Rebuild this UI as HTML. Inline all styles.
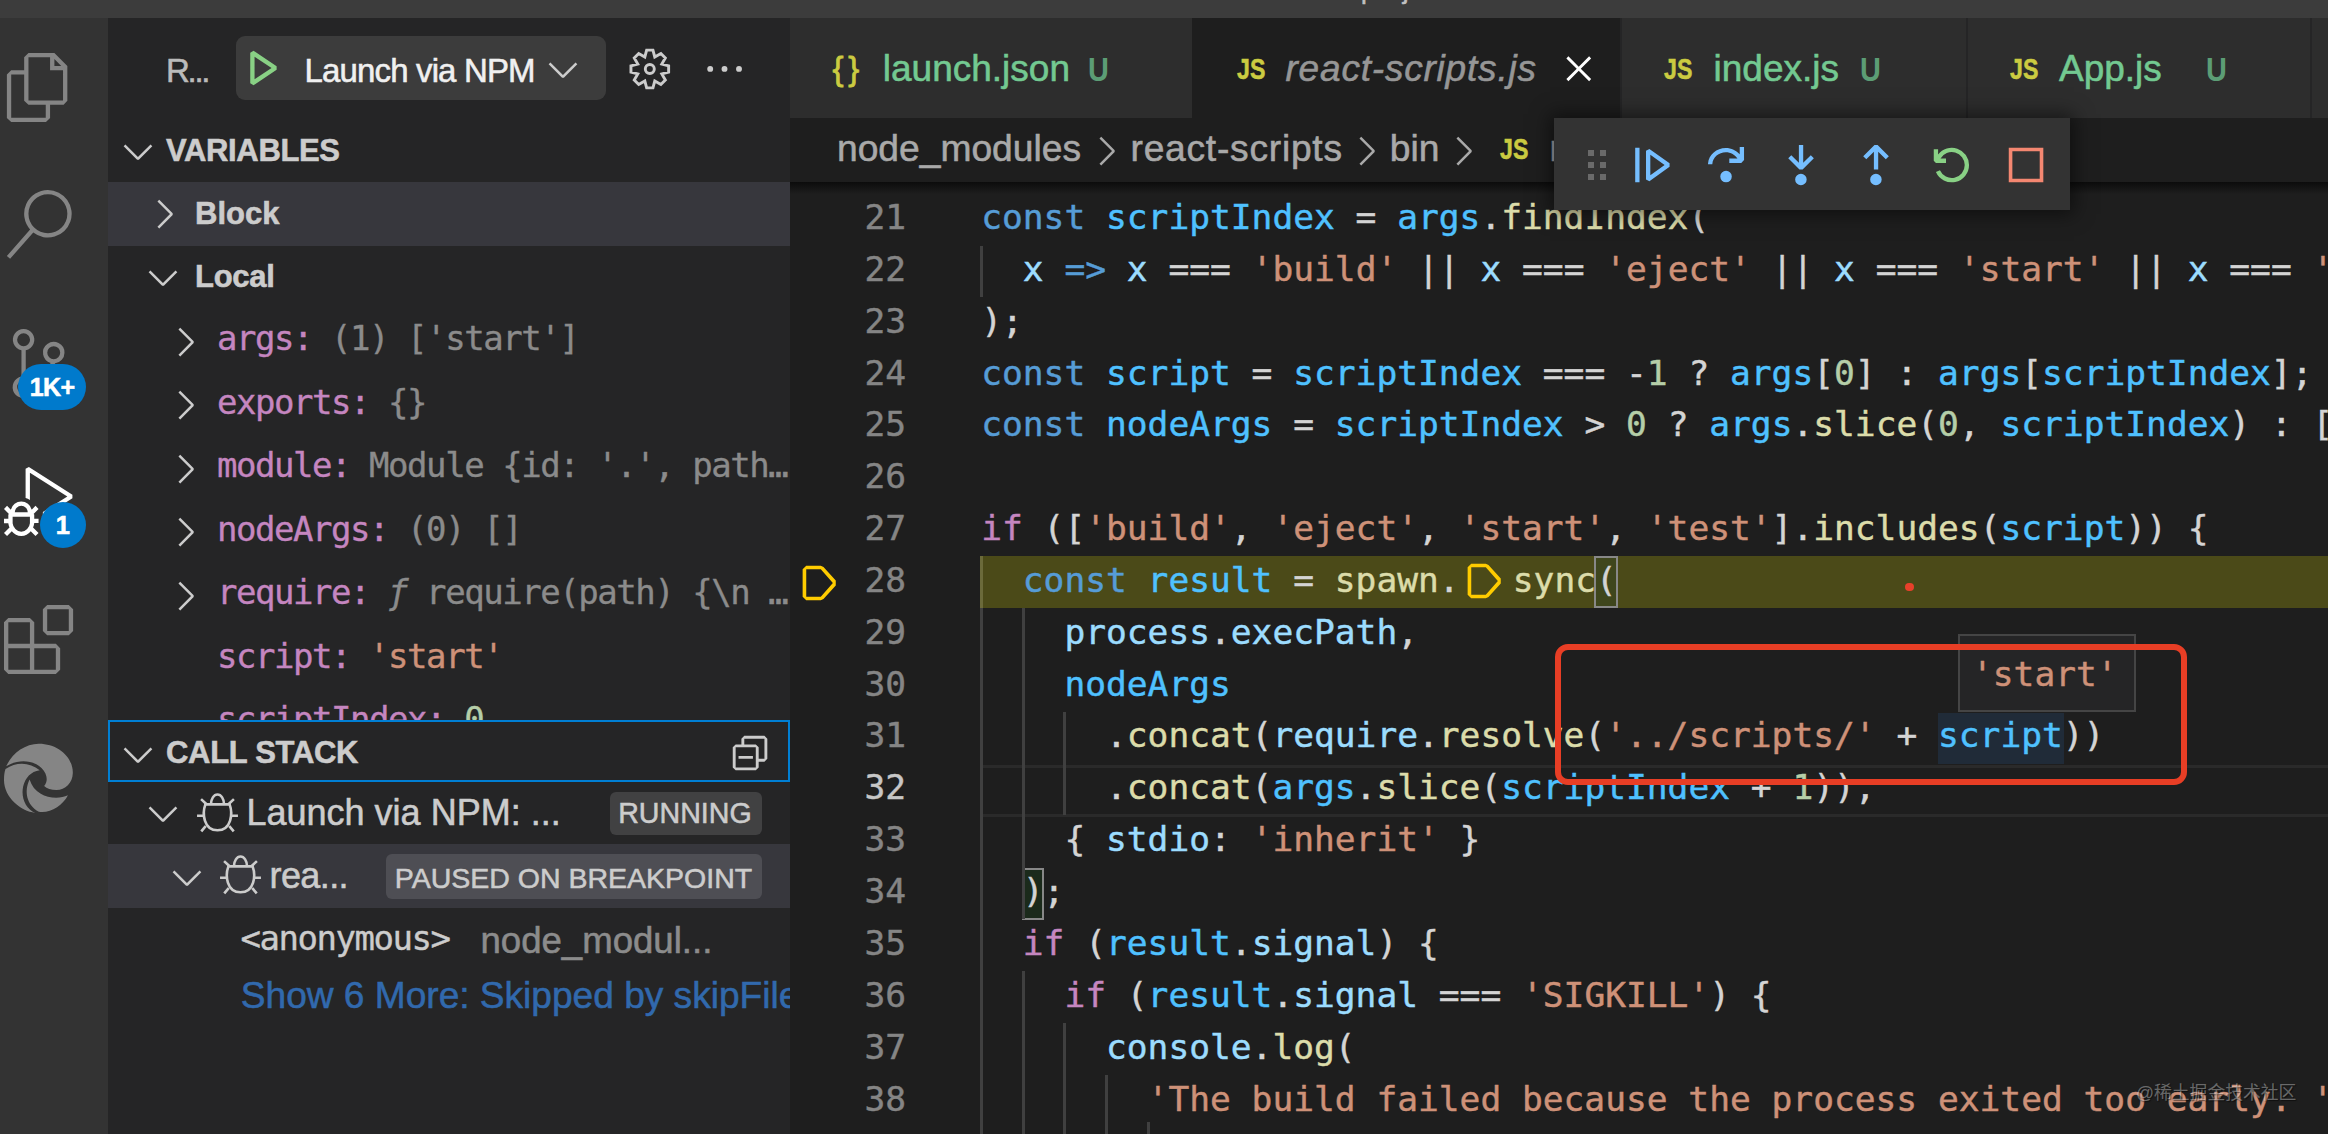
<!DOCTYPE html>
<html lang="en"><head><meta charset="utf-8"><title>react-scripts.js</title>
<style>
*{box-sizing:border-box;margin:0;padding:0}
html,body{width:2328px;height:1134px;overflow:hidden;background:#1e1e1e}
body{position:relative;font-family:"Liberation Sans","Noto Sans CJK SC",sans-serif;color:#ccc}
.abs{position:absolute}
.ui{-webkit-text-stroke-width:0.55px;font-family:"Liberation Sans","Noto Sans CJK SC",sans-serif;white-space:pre;position:absolute}
.mono{-webkit-text-stroke-width:0.4px;font-family:"DejaVu Sans Mono","Liberation Mono",monospace;white-space:pre;position:absolute}
#titlebar{left:0;top:0;width:2328px;height:18px;background:#3c3c3c}
#activity{left:0;top:18px;width:108px;height:1116px;background:#333333}
#sidebar{left:108px;top:18px;width:682px;height:1116px;background:#252526}
#tabsbg{left:790px;top:18px;width:1538px;height:100px;background:#252526}
.tab{position:absolute;top:18px;height:100px;background:#2d2d2d}
.tab.active{background:#1e1e1e}
#crumbs{left:790px;top:118px;width:1538px;height:64px;background:#1e1e1e}
.row{position:absolute;left:108px;width:682px;height:63.4px}
.sel{background:#37373d}
.cl{-webkit-text-stroke-width:0.45px;position:absolute;left:982px;height:51.84px;line-height:51.84px;font-size:34.56px;color:#d4d4d4;font-family:"DejaVu Sans Mono","Liberation Mono",monospace;white-space:pre}
.ln{-webkit-text-stroke-width:0.45px;position:absolute;left:801px;width:105px;text-align:right;height:51.84px;line-height:51.84px;font-size:34.56px;color:#858585;font-family:"DejaVu Sans Mono","Liberation Mono",monospace}
.k{color:#569cd6}.c{color:#4fc1ff}.v{color:#9cdcfe}.f{color:#dcdcaa}.s{color:#ce9178}.n{color:#b5cea8}.p{color:#c586c0}
.guide{position:absolute;width:3px;background:#404040}
.var{-webkit-text-stroke-width:0.35px;position:absolute;left:218px;width:571.5px;overflow:hidden;height:63.4px;line-height:63.4px;font-size:34px;letter-spacing:-1.46px;font-family:"DejaVu Sans Mono","Liberation Mono",monospace;white-space:pre;color:#8b8b8b}
.var b{font-weight:normal;color:#c586c0}
svg{position:absolute;overflow:visible}

</style></head>
<body>
<div class="abs" id="titlebar"></div>
<div class="abs" id="activity"></div>
<div class="abs" id="sidebar"></div>
<div class="abs" id="tabsbg"></div>
<svg style="left:4.2px;top:53px" width="69.12" height="69.12" viewBox="0 0 24 24" ><path fill="#858585" d="M17.5 0h-9L7 1.5V6H2.5L1 7.5v15.07L2.5 24h12.07L16 22.57V18h4.7l1.3-1.43V4.5L17.5 0zm0 2.12l2.38 2.38H17.5V2.12zm-3 20.38h-12v-15H7v9.07L8.5 18h6v4.5zm6-6h-12v-15H16V6h4.5v10.5z"/></svg>
<svg style="left:4.2px;top:190px" width="69.12" height="69.12" viewBox="0 0 24 24" ><path fill="#858585" d="M15.25 0a8.25 8.25 0 0 0-6.18 13.72L1 22.88l1.12 1 8.05-9.12A8.251 8.251 0 1 0 15.25.01V0zm0 15a6.75 6.75 0 1 1 0-13.5 6.75 6.75 0 0 1 0 13.5z"/></svg>
<svg style="left:4.2px;top:329px" width="69.12" height="69.12" viewBox="0 0 24 24" ><path fill="#858585" d="M21.007 8.222A3.738 3.738 0 0 0 15.045 5.2a3.737 3.737 0 0 0 1.156 6.583 2.988 2.988 0 0 1-2.668 1.67h-2.99a4.456 4.456 0 0 0-2.989 1.165V7.4a3.737 3.737 0 1 0-1.494 0v9.117a3.776 3.776 0 1 0 1.816.099 2.99 2.99 0 0 1 2.668-1.667h2.99a4.484 4.484 0 0 0 4.223-3.039 3.736 3.736 0 0 0 3.25-3.687zM4.565 3.738a2.242 2.242 0 1 1 4.484 0 2.242 2.242 0 0 1-4.484 0zm4.484 16.441a2.242 2.242 0 1 1-4.484 0 2.242 2.242 0 0 1 4.484 0zm8.221-9.715a2.242 2.242 0 1 1 0-4.485 2.242 2.242 0 0 1 0 4.485z"/></svg>
<svg style="left:4.2px;top:467px" width="69.12" height="69.12" viewBox="0 0 24 24" ><path fill="#ffffff" d="M10.94 13.5l-1.32 1.32a3.73 3.73 0 0 0-7.24 0L1.06 13.5 0 14.56l1.72 1.72-.22.22V18H0v1.5h1.5v.08c.077.489.214.966.41 1.42L0 22.94 1.06 24l1.65-1.65A4.308 4.308 0 0 0 6 24a4.31 4.31 0 0 0 3.29-1.65L10.94 24 12 22.94 10.09 21c.198-.464.336-.951.41-1.45v-.1H12V18h-1.5v-1.5l-.22-.22L12 14.56l-1.06-1.06zM6 13.5a2.25 2.25 0 0 1 2.25 2.25h-4.5A2.25 2.25 0 0 1 6 13.5zm3 6a3.33 3.33 0 0 1-3 3 3.33 3.33 0 0 1-3-3v-2.25h6v2.25zm14.76-9.9v1.26L13.5 17.37V15.6l8.5-5.37L9 2v9.46a5.07 5.07 0 0 0-1.5-.72V.63L8.64 0l15.12 9.6z"/></svg>
<svg style="left:4.2px;top:605px" width="69.12" height="69.12" viewBox="0 0 24 24" ><path fill="#858585" d="M13.5 1.5L15 0h7.5L24 1.5V9l-1.5 1.5H15L13.5 9V1.5zm1.5 0V9h7.5V1.5H15zM0 15V6l1.5-1.5H9L10.5 6v7.5H18l1.5 1.5v7.5L18 24H1.5L0 22.5V15zm9-1.5V6H1.5v7.5H9zM9 15H1.5v7.5H9V15zm1.5 7.5H18V15h-7.5v7.5z"/></svg>
<svg style="left:0;top:0" width="110" height="1134"><g transform="translate(4,743.7) scale(0.08822) translate(-45,-155)" fill="#858585"><path d="M70 412 C130 270 280 155 440 155 C660 155 830 310 825 490 C822 600 740 680 640 680 C580 680 530 665 500 635 C545 585 540 500 470 430 C380 340 200 325 70 412Z"/><path d="M62 442 C190 355 340 368 450 455 C350 470 285 540 262 640 C235 770 290 890 400 940 C230 920 40 760 45 560 C45 510 52 470 62 442Z"/><path d="M335 560 C270 690 300 850 440 927 C560 950 710 860 770 740 C640 800 400 770 335 560Z"/></g></svg>
<div class="abs" style="left:18.4px;top:364.2px;width:67.4px;height:46px;border-radius:23px;background:#007acc"></div>
<div class="ui" style="left:18.4px;top:364.2px;width:67.4px;height:46px;line-height:46px;text-align:center;font-size:25px;font-weight:bold;color:#fff;letter-spacing:-0.6px">1K+</div>
<div class="abs" style="left:39.9px;top:502.3px;width:46px;height:46px;border-radius:23px;background:#007acc"></div>
<div class="ui" style="left:39.9px;top:502.3px;width:46px;height:46px;line-height:46px;text-align:center;font-size:25.5px;font-weight:bold;color:#fff">1</div>
<div class="ui" style="left:166px;top:46.6px;line-height:48px;font-size:33px;color:#bbbbbb;letter-spacing:-2.3px;">R...</div>
<div class="abs" style="left:236px;top:36px;width:370px;height:64px;border-radius:9px;background:#3c3c3c"></div>
<svg style="left:237.5px;top:44.2px" width="46.08" height="46.08" viewBox="0 0 16 16" ><path fill="#89d185" d="M4.25 3l1.166-.624 8 5.333v1.248l-8 5.334-1.166-.624V3zm1.5 1.401v7.864l5.898-3.932L5.75 4.401z"/></svg>
<div class="ui" style="left:304.5px;top:46.8px;line-height:48px;font-size:33px;color:#f0f0f0;letter-spacing:-0.85px;">Launch via NPM</div>
<svg style="left:540.4px;top:45.6px" width="46.08" height="46.08" viewBox="0 0 16 16" ><path fill="#cccccc" d="M7.976 10.072l4.357-4.357.62.618L8.284 11h-.618L3 6.333l.619-.618 4.357 4.357z"/></svg>
<svg style="left:0;top:0" width="2328" height="1134"><path d="M652.95 50.16 L646.65 50.16 L644.83 56.99 L638.71 53.45 L634.25 57.91 L637.79 64.03 L630.96 65.85 L630.96 72.15 L637.79 73.97 L634.25 80.09 L638.71 84.55 L644.83 81.01 L646.65 87.84 L652.95 87.84 L654.77 81.01 L660.89 84.55 L665.35 80.09 L661.81 73.97 L668.64 72.15 L668.64 65.85 L661.81 64.03 L665.35 57.91 L660.89 53.45 L654.77 56.99Z" fill="none" stroke="#cccccc" stroke-width="2.9" stroke-linejoin="miter"/><circle cx="649.8" cy="69" r="4.5" fill="none" stroke="#cccccc" stroke-width="2.9"/><circle cx="710.2" cy="68.9" r="2.95" fill="#ccc"/><circle cx="724.5" cy="68.9" r="2.95" fill="#ccc"/><circle cx="739" cy="68.9" r="2.95" fill="#ccc"/></svg>
<svg style="left:114.9px;top:127.6px" width="46.08" height="46.08" viewBox="0 0 16 16" ><path fill="#cccccc" d="M7.976 10.072l4.357-4.357.62.618L8.284 11h-.618L3 6.333l.619-.618 4.357 4.357z"/></svg>
<div class="ui" style="left:166px;top:126.6px;line-height:48px;font-size:31px;color:#cccccc;letter-spacing:-0.35px;font-weight:bold;">VARIABLES</div>
<div class="row sel" style="top:182px;height:64px"></div>
<svg style="left:141.3px;top:190.5px" width="46.08" height="46.08" viewBox="0 0 16 16" ><path fill="#cccccc" d="M10.072 8.024L5.715 3.667l.618-.62L11 7.716v.618L6.333 13l-.618-.619 4.357-4.357z"/></svg>
<div class="ui" style="left:195px;top:189.5px;line-height:48px;font-size:31px;color:#cccccc;font-weight:bold;">Block</div>
<svg style="left:140.4px;top:253.8px" width="46.08" height="46.08" viewBox="0 0 16 16" ><path fill="#cccccc" d="M7.976 10.072l4.357-4.357.62.618L8.284 11h-.618L3 6.333l.619-.618 4.357 4.357z"/></svg>
<div class="ui" style="left:195px;top:253.3px;line-height:48px;font-size:31px;color:#cccccc;letter-spacing:-0.3px;font-weight:bold;">Local</div>
<svg style="left:162.4px;top:318.9px" width="46.08" height="46.08" viewBox="0 0 16 16" ><path fill="#cccccc" d="M10.072 8.024L5.715 3.667l.618-.62L11 7.716v.618L6.333 13l-.618-.619 4.357-4.357z"/></svg>
<div class="var" style="left:217px;top:307.0px"><b>args:</b> (1) ['start']</div>
<svg style="left:162.4px;top:382.4px" width="46.08" height="46.08" viewBox="0 0 16 16" ><path fill="#cccccc" d="M10.072 8.024L5.715 3.667l.618-.62L11 7.716v.618L6.333 13l-.618-.619 4.357-4.357z"/></svg>
<div class="var" style="left:217px;top:370.5px"><b>exports:</b> {}</div>
<svg style="left:162.4px;top:445.9px" width="46.08" height="46.08" viewBox="0 0 16 16" ><path fill="#cccccc" d="M10.072 8.024L5.715 3.667l.618-.62L11 7.716v.618L6.333 13l-.618-.619 4.357-4.357z"/></svg>
<div class="var" style="left:217px;top:434.0px"><b>module:</b> Module {id: '.', path…</div>
<svg style="left:162.4px;top:509.4px" width="46.08" height="46.08" viewBox="0 0 16 16" ><path fill="#cccccc" d="M10.072 8.024L5.715 3.667l.618-.62L11 7.716v.618L6.333 13l-.618-.619 4.357-4.357z"/></svg>
<div class="var" style="left:217px;top:497.5px"><b>nodeArgs:</b> (0) []</div>
<svg style="left:162.4px;top:572.9px" width="46.08" height="46.08" viewBox="0 0 16 16" ><path fill="#cccccc" d="M10.072 8.024L5.715 3.667l.618-.62L11 7.716v.618L6.333 13l-.618-.619 4.357-4.357z"/></svg>
<div class="var" style="left:217px;top:561.0px"><b>require:</b> <i>ƒ</i> require(path) {\n …</div>
<div class="var" style="left:217px;top:624.5px"><b>script:</b> <span style="color:#ce9178">'start'</span></div>
<div class="var" style="left:217px;top:688.0px"><b>scriptIndex:</b> <span style="color:#b5cea8">0</span></div>
<div class="abs" style="left:108px;top:720px;width:682px;height:414px;background:#252526"></div>
<div class="abs" style="left:108px;top:720px;width:682px;height:62px;border:2px solid #007fd4"></div>
<svg style="left:114.9px;top:731.1px" width="46.08" height="46.08" viewBox="0 0 16 16" ><path fill="#cccccc" d="M7.976 10.072l4.357-4.357.62.618L8.284 11h-.618L3 6.333l.619-.618 4.357 4.357z"/></svg>
<div class="ui" style="left:166px;top:729.0px;line-height:48px;font-size:31px;color:#cccccc;letter-spacing:-0.3px;font-weight:bold;">CALL STACK</div>
<svg style="left:727.2px;top:730.3px" width="46.08" height="46.08" viewBox="0 0 16 16" ><path fill="#cccccc" d="M9 9H4v1h5V9zM5 3l1-1h7l1 1v7l-1 1h-2v2l-1 1H3l-1-1V6l1-1h2V3zm1 2h4l1 1v4h2V3H6v2zm4 1H3v7h7V6z"/></svg>
<svg style="left:140.4px;top:790.3px" width="46.08" height="46.08" viewBox="0 0 16 16" ><path fill="#cccccc" d="M7.976 10.072l4.357-4.357.62.618L8.284 11h-.618L3 6.333l.619-.618 4.357 4.357z"/></svg>
<svg style="left:197px;top:792.8px" width="41" height="39" viewBox="0 0 40.700 38.800"><g fill="none" stroke="#cccccc" stroke-width="2.6"><path d="M8.300 11.3H32.4C35.6 20 34.5 37 20.35 37C6.200 37 5.100 20 8.300 11.3Z"/><path d="M13.85 11.3A6.500 9.800 0 0 1 26.85 11.3"/><path d="M4 6.100L9.200 10.900M36.700 6.100L31.500 10.900M0 22.700H6.400M34.300 22.700H40.700M8.600 33L4.200 38.200M32.100 33L36.500 38.200"/></g></svg>
<div class="ui" style="left:246.5px;top:789.2px;line-height:48px;font-size:36px;color:#cccccc;">Launch via NPM: ...</div>
<div class="abs" style="left:610.3px;top:792.3px;width:151.500px;height:43px;border-radius:6px;background:#414142"></div>
<div class="ui" style="left:618.2px;top:789.4px;line-height:48px;font-size:28.6px;color:#cccccc;">RUNNING</div>
<div class="row sel" style="top:844.2px;height:63.8px"></div>
<svg style="left:163.6px;top:853.6px" width="46.08" height="46.08" viewBox="0 0 16 16" ><path fill="#cccccc" d="M7.976 10.072l4.357-4.357.62.618L8.284 11h-.618L3 6.333l.619-.618 4.357 4.357z"/></svg>
<svg style="left:220.0px;top:855.2px" width="41" height="39" viewBox="0 0 40.700 38.800"><g fill="none" stroke="#cccccc" stroke-width="2.6"><path d="M8.300 11.3H32.4C35.6 20 34.5 37 20.35 37C6.200 37 5.100 20 8.300 11.3Z"/><path d="M13.85 11.3A6.500 9.800 0 0 1 26.85 11.3"/><path d="M4 6.100L9.200 10.900M36.700 6.100L31.500 10.900M0 22.700H6.400M34.300 22.700H40.700M8.600 33L4.200 38.200M32.100 33L36.500 38.200"/></g></svg>
<div class="ui" style="left:269.5px;top:852.2px;line-height:48px;font-size:36px;color:#cccccc;letter-spacing:-0.6px;">rea...</div>
<div class="abs" style="left:385.7px;top:854.1px;width:376.100px;height:45.4px;border-radius:6px;background:#4e4e54"></div>
<div class="ui" style="left:394.8px;top:853.6px;line-height:48px;font-size:28.5px;color:#cccccc;">PAUSED ON BREAKPOINT</div>
<div class="mono" style="left:240.5px;top:914.4px;line-height:48px;font-size:34px;color:#cccccc;letter-spacing:-1.46px;">&lt;anonymous&gt;</div>
<div class="ui" style="left:480.5px;top:917.0px;line-height:48px;font-size:36.6px;color:#8c8c8c;">node_modul...</div>
<div class="abs" style="left:240px;top:972px;width:550px;height:60px;overflow:hidden"><div class="ui" style="left:0.800px;top:-1.5px;line-height:48px;font-size:37.1px;color:#3169ad">Show 6 More: Skipped by skipFiles</div></div>
<div class="tab" style="left:790px;width:402px"></div>
<div class="tab active" style="left:1192.4px;width:427.5999999999999px"></div>
<div class="tab" style="left:1622.4px;width:343.5999999999999px"></div>
<div class="tab" style="left:1968px;width:342.3000000000002px"></div>
<div class="tab" style="left:2312.3px;width:27.699999999999818px"></div>
<div class="ui" style="left:832.5px;top:44.6px;line-height:48px;font-size:33px;color:#cbcb41;letter-spacing:-2.2px;-webkit-text-stroke-width:0.8px;">{ }</div>
<div class="ui" style="left:882.8px;top:44.8px;line-height:48px;font-size:37px;color:#73c991;">launch.json</div>
<div class="ui" style="left:1088px;top:45.0px;line-height:48px;font-size:34px;color:#5c9d75;font-weight:bold;transform:scaleX(0.85);transform-origin:0 50%;-webkit-text-stroke-width:0;">U</div>
<div class="ui" style="left:1237px;top:48.7px;line-height:40px;font-size:28.6px;color:#cbcb41;font-weight:bold;transform:scaleX(0.81);transform-origin:0 50%;">JS</div>
<div class="ui" style="left:1285.5px;top:44.8px;line-height:48px;font-size:37px;color:#969696;letter-spacing:0.8px;font-style:italic;">react-scripts.js</div>
<svg style="left:1556.2px;top:46.2px" width="45.5" height="45.5" viewBox="0 0 16 16" ><path fill="#ffffff" d="M8 8.707l3.646 3.647.708-.707L8.707 8l3.647-3.646-.707-.708L8 7.293 4.354 3.646l-.707.708L7.293 8l-3.646 3.646.707.708L8 8.707z"/></svg>
<div class="ui" style="left:1664px;top:48.7px;line-height:40px;font-size:28.6px;color:#cbcb41;font-weight:bold;transform:scaleX(0.81);transform-origin:0 50%;">JS</div>
<div class="ui" style="left:1713.5px;top:44.8px;line-height:48px;font-size:37px;color:#73c991;">index.js</div>
<div class="ui" style="left:1860.2px;top:45.0px;line-height:48px;font-size:34px;color:#5c9d75;font-weight:bold;transform:scaleX(0.85);transform-origin:0 50%;-webkit-text-stroke-width:0;">U</div>
<div class="ui" style="left:2010px;top:48.7px;line-height:40px;font-size:28.6px;color:#cbcb41;font-weight:bold;transform:scaleX(0.81);transform-origin:0 50%;">JS</div>
<div class="ui" style="left:2059px;top:44.8px;line-height:48px;font-size:37px;color:#73c991;">App.js</div>
<div class="ui" style="left:2206.2px;top:45.0px;line-height:48px;font-size:34px;color:#5c9d75;font-weight:bold;transform:scaleX(0.85);transform-origin:0 50%;-webkit-text-stroke-width:0;">U</div>
<div class="abs" id="crumbs"></div>
<div class="ui" style="left:837px;top:124.3px;line-height:48px;font-size:37.2px;color:#a9a9a9;">node_modules</div>
<svg style="left:1083.3px;top:128.1px" width="46.08" height="46.08" viewBox="0 0 16 16" ><path fill="#a9a9a9" d="M10.072 8.024L5.715 3.667l.618-.62L11 7.716v.618L6.333 13l-.618-.619 4.357-4.357z"/></svg>
<div class="ui" style="left:1130.5px;top:124.3px;line-height:48px;font-size:37.2px;color:#a9a9a9;letter-spacing:0.75px;">react-scripts</div>
<svg style="left:1343.2px;top:128.1px" width="46.08" height="46.08" viewBox="0 0 16 16" ><path fill="#a9a9a9" d="M10.072 8.024L5.715 3.667l.618-.62L11 7.716v.618L6.333 13l-.618-.619 4.357-4.357z"/></svg>
<div class="ui" style="left:1389.8px;top:124.3px;line-height:48px;font-size:37.2px;color:#a9a9a9;">bin</div>
<svg style="left:1439.9px;top:128.1px" width="46.08" height="46.08" viewBox="0 0 16 16" ><path fill="#a9a9a9" d="M10.072 8.024L5.715 3.667l.618-.62L11 7.716v.618L6.333 13l-.618-.619 4.357-4.357z"/></svg>
<div class="ui" style="left:1499.9px;top:128.9px;line-height:40px;font-size:28.6px;color:#cbcb41;font-weight:bold;transform:scaleX(0.81);transform-origin:0 50%;">JS</div>
<div class="ui" style="left:1549.5px;top:124.3px;line-height:48px;font-size:37.2px;color:#a9a9a9;">r</div>
<div class="abs" style="left:790px;top:182px;width:1538px;height:12px;background:linear-gradient(#0c0c0c,rgba(12,12,12,0))"></div>
<div class="abs" style="left:980.1px;top:556.0px;width:1348px;height:52px;background:#4b4a18"></div>
<div class="abs" style="left:983px;top:764.6px;width:1346px;height:52px;border-top:3.5px solid #2a2a2a;border-bottom:3.5px solid #2a2a2a"></div>
<div class="abs" style="left:1938.2px;top:712.6px;width:125.6px;height:51.2px;background:#202b38"></div>
<div class="abs" style="left:1594.2px;top:556.0px;width:23.8px;height:52px;background:#3f461d;border:2px solid #888"></div>
<div class="abs" style="left:1021.6px;top:867.5px;width:22.8px;height:52px;background:#1b2a1b;border:2px solid #888"></div>
<div class="guide" style="left:980.1px;top:245.5px;height:51.8px;background:#404040"></div>
<div class="guide" style="left:980.1px;top:556.0px;height:51.8px;background:#6b6a3a"></div>
<div class="guide" style="left:980.1px;top:608.0px;height:543.6px;background:#404040"></div>
<div class="guide" style="left:1021.7px;top:608.0px;height:310.6px;background:#404040"></div>
<div class="guide" style="left:1063.3px;top:711.8px;height:103.5px;background:#404040"></div>
<div class="guide" style="left:1021.7px;top:971.3px;height:181.2px;background:#404040"></div>
<div class="guide" style="left:1063.3px;top:1023.2px;height:129.4px;background:#404040"></div>
<div class="guide" style="left:1104.9px;top:1075.1px;height:77.7px;background:#404040"></div>
<div class="guide" style="left:1146.6px;top:1121.9px;height:51.8px;background:#404040"></div>
<div class="ln" style="top:192.4px;color:#858585">21</div>
<div class="cl" style="left:981.2px;top:192.4px"><span class="k">const</span> <span class="c">scriptIndex</span> = <span class="c">args</span>.<span class="f">findIndex</span>(</div>
<div class="ln" style="top:244.1px;color:#858585">22</div>
<div class="cl" style="left:981.2px;top:244.1px">  <span class="v">x</span> <span class="k">=&gt;</span> <span class="v">x</span> === <span class="s">'build'</span> || <span class="v">x</span> === <span class="s">'eject'</span> || <span class="v">x</span> === <span class="s">'start'</span> || <span class="v">x</span> === <span class="s">'test'</span></div>
<div class="ln" style="top:295.9px;color:#858585">23</div>
<div class="cl" style="left:981.2px;top:295.9px">);</div>
<div class="ln" style="top:347.6px;color:#858585">24</div>
<div class="cl" style="left:981.2px;top:347.6px"><span class="k">const</span> <span class="c">script</span> = <span class="c">scriptIndex</span> === -<span class="n">1</span> ? <span class="c">args</span>[<span class="n">0</span>] : <span class="c">args</span>[<span class="c">scriptIndex</span>];</div>
<div class="ln" style="top:399.4px;color:#858585">25</div>
<div class="cl" style="left:981.2px;top:399.4px"><span class="k">const</span> <span class="c">nodeArgs</span> = <span class="c">scriptIndex</span> &gt; <span class="n">0</span> ? <span class="c">args</span>.<span class="f">slice</span>(<span class="n">0</span>, <span class="c">scriptIndex</span>) : [];</div>
<div class="ln" style="top:451.1px;color:#858585">26</div>
<div class="ln" style="top:502.9px;color:#858585">27</div>
<div class="cl" style="left:981.2px;top:502.9px"><span class="p">if</span> ([<span class="s">'build'</span>, <span class="s">'eject'</span>, <span class="s">'start'</span>, <span class="s">'test'</span>].<span class="f">includes</span>(<span class="c">script</span>)) {</div>
<div class="ln" style="top:554.6px;color:#858585">28</div>
<div class="cl" style="left:981.2px;top:554.6px">  <span class="k">const</span> <span class="c">result</span> = <span class="f">spawn</span>.<span style="display:inline-block;width:53.2px"></span><span class="f">sync</span>(</div>
<div class="ln" style="top:606.6px;color:#858585">29</div>
<div class="cl" style="left:981.2px;top:606.6px">    <span class="v">process</span>.<span class="v">execPath</span>,</div>
<div class="ln" style="top:658.5px;color:#858585">30</div>
<div class="cl" style="left:981.2px;top:658.5px">    <span class="c">nodeArgs</span></div>
<div class="ln" style="top:710.4px;color:#858585">31</div>
<div class="cl" style="left:981.2px;top:710.4px">      .<span class="f">concat</span>(<span class="v">require</span>.<span class="f">resolve</span>(<span class="s">'../scripts/'</span> + <span class="c">script</span>))</div>
<div class="ln" style="top:762.3px;color:#c6c6c6">32</div>
<div class="cl" style="left:981.2px;top:762.3px">      .<span class="f">concat</span>(<span class="c">args</span>.<span class="f">slice</span>(<span class="c">scriptIndex</span> + <span class="n">1</span>)),</div>
<div class="ln" style="top:814.2px;color:#858585">33</div>
<div class="cl" style="left:981.2px;top:814.2px">    { <span class="v">stdio</span>: <span class="s">'inherit'</span> }</div>
<div class="ln" style="top:866.1px;color:#858585">34</div>
<div class="cl" style="left:981.2px;top:866.1px">  );</div>
<div class="ln" style="top:918.0px;color:#858585">35</div>
<div class="cl" style="left:981.2px;top:918.0px">  <span class="p">if</span> (<span class="c">result</span>.<span class="v">signal</span>) {</div>
<div class="ln" style="top:969.9px;color:#858585">36</div>
<div class="cl" style="left:981.2px;top:969.9px">    <span class="p">if</span> (<span class="c">result</span>.<span class="v">signal</span> === <span class="s">'SIGKILL'</span>) {</div>
<div class="ln" style="top:1021.8px;color:#858585">37</div>
<div class="cl" style="left:981.2px;top:1021.8px">      <span class="v">console</span>.<span class="f">log</span>(</div>
<div class="ln" style="top:1073.7px;color:#858585">38</div>
<div class="cl" style="left:981.2px;top:1073.7px">        <span class="s">'The build failed because the process exited too early. '</span> +</div>
<svg style="left:794.2px;top:560.1px" width="46.08" height="46.08" viewBox="0 0 16 16" ><path fill="#ffcc00" d="M14.5 7.15l-4.26-4.74L9.31 2H4.25L3 3.25v9.5L4.25 14h5.06l.93-.42 4.26-4.73V7.15zm-5.19 5.6H4.25v-9.5h5.06L13.5 8l-4.19 4.75z"/></svg>
<svg style="left:1458.5px;top:558.2px" width="46.08" height="46.08" viewBox="0 0 16 16" ><path fill="#ffcc00" d="M14.5 7.15l-4.26-4.74L9.31 2H4.25L3 3.25v9.5L4.25 14h5.06l.93-.42 4.26-4.73V7.15zm-5.19 5.6H4.25v-9.5h5.06L13.5 8l-4.19 4.75z"/></svg>
<div class="abs" style="left:1905px;top:583px;width:9px;height:8px;border-radius:4px;background:#e8402a"></div>
<div class="abs" style="left:1554.4px;top:117.6px;width:515.600px;height:92.3px;background:#333333;box-shadow:0 0 18px 4px rgba(0,0,0,0.5)"></div>
<svg style="left:1573.4px;top:140.8px" width="48" height="48" viewBox="0 0 16 16" ><path fill="#6a6a6a" d="M5 3h2v2H5zm0 4h2v2H5zm0 4h2v2H5zm4-8h2v2H9zm0 4h2v2H9zm0 4h2v2H9z"/></svg>
<svg style="left:1627.8px;top:141.7px" width="46.08" height="46.08" viewBox="0 0 16 16" ><path fill="#75beff" d="M2.5 2H4v12H2.5V2zm4.936.39L6.25 3v10l1.186.61 7-5V7.39l-7-5zM12.71 8l-4.96 3.543V4.457L12.71 8z"/></svg>
<svg style="left:1702.8999999999999px;top:141.7px" width="46.08" height="46.08" viewBox="0 0 16 16" ><path fill="#75beff" d="M14.25 5.75v-4h-1.5v2.542c-1.145-1.359-2.911-2.209-4.84-2.209-3.177 0-5.92 2.307-6.16 5.398l-.02.269h1.501l.022-.226c.212-2.195 2.202-3.94 4.656-3.94 1.736 0 3.244.875 4.05 2.166h-2.83v1.5h4.163l.962-.975V5.75h-.004zM8 14a2 2 0 1 0 0-4 2 2 0 0 0 0 4z"/></svg>
<svg style="left:1778.0px;top:141.7px" width="46.08" height="46.08" viewBox="0 0 16 16" ><path fill="#75beff" d="M8 9.532h.542l3.905-3.905-1.061-1.06-2.637 2.61V1H7.251v6.177l-2.637-2.61-1.061 1.06 3.905 3.905H8zm1.956 3.481a2 2 0 1 1-4 0 2 2 0 0 1 4 0z"/></svg>
<svg style="left:1853.1px;top:141.7px" width="46.08" height="46.08" viewBox="0 0 16 16" ><path fill="#75beff" d="M8 1h-.542L3.553 4.905l1.061 1.06 2.637-2.61v6.177h1.498V3.355l2.637 2.61 1.061-1.06L8.542 1H8zm1.956 12.013a2 2 0 1 1-4 0 2 2 0 0 1 4 0z"/></svg>
<svg style="left:1928.1999999999998px;top:141.7px" width="46.08" height="46.08" viewBox="0 0 16 16" ><path fill="#89d185" d="M12.75 8a4.5 4.5 0 0 1-8.61 1.834l-1.391.565A6.001 6.001 0 0 0 14.25 8 6 6 0 0 0 3.5 4.334V2.5H2v4l.75.75h3.5v-1.5H4.352A4.5 4.5 0 0 1 12.75 8z"/></svg>
<svg style="left:2003.3px;top:141.7px" width="46.08" height="46.08" viewBox="0 0 16 16" ><path fill="#f48771" d="M2 2v12h12V2H2zm10.750 10.75h-9.5v-9.5h9.5v9.5z"/></svg>
<div class="abs" style="left:1958.100px;top:634px;width:178.100px;height:77.7px;background:#252526;border:2px solid #454545"></div>
<div class="mono" style="left:1972px;top:648.2px;line-height:52px;font-size:34.56px;color:#ce9178;">'start'</div>
<div class="abs" style="left:1555.100px;top:643.5px;width:631.7px;height:141.2px;border:6.3px solid #e83e25;border-radius:13px"></div>
<div class="ui" style="left:2136px;top:1079.300px;line-height:28px;font-size:17.8px;-webkit-text-stroke-width:0;color:rgba(255,255,255,0.36);text-shadow:1px 1px 1px rgba(0,0,0,0.5)">@稀土掘金技术社区</div>
<div class="ui" style="left:1254px;top:-27.7px;line-height:36px;font-size:26px;color:#c0c0c0;">react-scripts.js — cra-tests</div>
</body></html>
